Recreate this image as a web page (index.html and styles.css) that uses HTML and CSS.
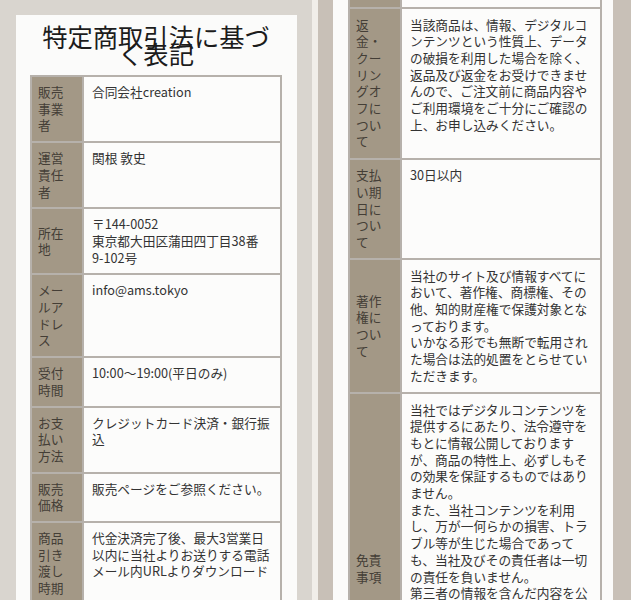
FILE: index.html
```html
<!DOCTYPE html>
<html lang="ja">
<head>
<meta charset="utf-8">
<title>特定商取引法に基づく表記</title>
<link rel="stylesheet" href="styles.css">
</head>
<body>
<div class="screens">
  <section class="panel panel-left">
    <div class="card">
      <h1 class="title">特定商取引法に基づく表記</h1>
      <table class="info info-compact">
        <colgroup><col class="col-head"><col></colgroup>
        <tr><th>販売事業者</th><td>合同会社creation</td></tr>
        <tr><th>運営責任者</th><td>関根 敦史</td></tr>
        <tr><th>所在地</th><td>〒144-0052<br>東京都大田区蒲田四丁目38番<span class="nowrap">9-102号</span></td></tr>
        <tr><th>メールアドレス</th><td>info@ams.tokyo</td></tr>
        <tr><th>受付時間</th><td>10:00〜19:00(平日のみ)</td></tr>
        <tr><th>お支払い方法</th><td>クレジットカード決済・銀行振込</td></tr>
        <tr><th>販売価格</th><td>販売ページをご参照ください。</td></tr>
        <tr><th>商品引き渡し時期</th><td>代金決済完了後、最大3営業日以内に当社よりお送りする電話メール内URLよりダウンロード</td></tr>
      </table>
    </div>
  </section>
  <div class="divider"></div>
  <section class="panel panel-right">
    <div class="card card-right">
      <table class="info">
        <colgroup><col class="col-head"><col></colgroup>
        <tr class="cut"><th></th><td></td></tr>
        <tr><th>返金・クーリングオフについて</th><td>当該商品は、情報、デジタルコンテンツという性質上、データの破損を利用した場合を除く、返品及び返金をお受けできませんので、ご注文前に商品内容やご利用環境をご十分にご確認の上、お申し込みください。</td></tr>
        <tr><th>支払い期日について</th><td>30日以内</td></tr>
        <tr><th>著作権について</th><td>当社のサイト及び情報すべてにおいて、著作権、商標権、その他、知的財産権で保護対象となっております。<br>いかなる形でも無断で転用された場合は法的処置をとらせていただきます。</td></tr>
        <tr><th>免責事項</th><td>当社ではデジタルコンテンツを提供するにあたり、法令遵守をもとに情報公開しておりますが、商品の特性上、必ずしもその効果を保証するものではありません。<br>また、当社コンテンツを利用し、万が一何らかの損害、トラブル等が生じた場合であっても、当社及びその責任者は一切の責任を負いません。<br>第三者の情報を含んだ内容を公開する場合がございますが、その内容の正確性・安全性等について当社は保証いたしません。<br>また、当社は予告なくサイトの内容を変更・中断することがございますので、あらかじめご了承ください。<br>よろしくお願いいたします。</td></tr>
      </table>
    </div>
  </section>
</div>
</body>
</html>
```

FILE: styles.css
```css
html, body {
  margin: 0;
  padding: 0;
}

body {
  width: 631px;
  height: 600px;
  overflow: hidden;
  font-family: "Noto Sans CJK JP", "Noto Sans", sans-serif;
  line-break: normal;
}

.screens {
  display: flex;
  height: 600px;
}

.panel {
  box-sizing: border-box;
  height: 600px;
  overflow: hidden;
}

.panel-left {
  flex: none;
  width: 312px;
  background: #d9d5cf;
  padding: 15px 15px 0 16px;
}

.divider {
  flex: none;
  width: 6px;
  background: #f1eee9;
}

.panel-right {
  flex: 1;
  background: #c8c0b7;
  padding: 0 18px 0 15px;
}

.card {
  box-sizing: border-box;
  height: 100%;
  background: #fbfbfa;
  padding: 13px 15px 0 14px;
}

.card-right {
  padding: 0 11px 0 15px;
}

.title {
  margin: 0 4px 14px;
  font-size: 25.3px;
  font-weight: 400;
  line-height: 16.5px;
  text-align: center;
  color: #1c1c1c;
}

.info {
  width: 100%;
  border-collapse: collapse;
  table-layout: fixed;
  font-size: 12.7px;
  line-height: 16.7px;
}

.col-head {
  width: 52px;
}

.info th,
.info td {
  border: 2px solid #b6b1ab;
  padding: 7.5px 8px;
}

.info th {
  padding: 7.5px 10px 7.5px 6px;
  background: #a39886;
  color: #443e36;
  font-weight: 400;
  text-align: left;
  vertical-align: middle;
}

.info td {
  background: #fcfcfb;
  color: #333;
  vertical-align: top;
}

.info-compact th,
.info-compact td {
  padding-top: 7px;
  padding-bottom: 7px;
}

.nowrap {
  white-space: nowrap;
}

.info .cut th,
.info .cut td {
  border-top: 0;
  height: 0;
  padding: 3px 0 4px;
}
```
